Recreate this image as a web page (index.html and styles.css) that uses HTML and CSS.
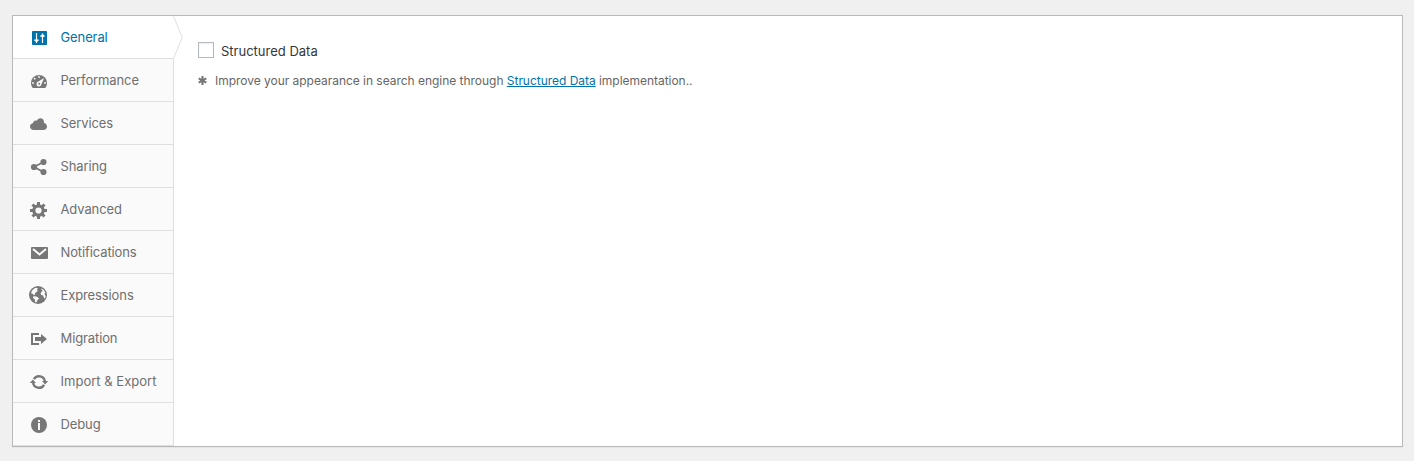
FILE: index.html
```html
<!DOCTYPE html>
<html lang="en">
<head>
<meta charset="utf-8">
<title>Settings</title>
<link rel="stylesheet" href="styles.css">
</head>
<body>
<main class="panel">
  <nav class="tabs">
    <a class="tab tab-active"><svg class="icon" viewBox="0 0 20 20"><rect x="3" y="3" width="15" height="14" rx=".8" fill="currentColor"/><path d="M7.500 5v10M5.300 12.200h4.400M13.500 5.500V15M11.300 8.200h4.400" stroke="#fff" stroke-width="1.200" fill="none"/><path d="M5.500 12h4l-2 2.700zM11.500 8.300h4l-2-2.700z" fill="#fff"/></svg><span class="label">General</span><svg class="pointer" viewBox="0 0 10 43"><path d="M0 0h1l8 21.500L1 42H0z" fill="#fff"/><path d="M.5 0L9.200 21.500L.5 42.500" fill="none" stroke="#dfdfdf"/></svg></a>
    <a class="tab"><svg class="icon" viewBox="0 0 20 20"><path fill="currentColor" d="M3.800 17C2.600 15.600 2 14 2 12a8 8 0 0 1 16 0c0 2-.6 3.600-1.800 5z"/><g fill="#fafafa"><circle cx="10" cy="6" r=".9"/><circle cx="5.700" cy="7.700" r=".9"/><circle cx="4" cy="12" r=".9"/><circle cx="16" cy="12" r=".9"/><path d="M15 7l-2.600 6.500a2.500 2.500 0 1 1-3-3z"/></g><circle cx="10.200" cy="12.800" r="1" fill="currentColor"/></svg><span class="label">Performance</span></a>
    <a class="tab"><svg class="icon" viewBox="0 0 20 20"><path fill="currentColor" d="M14.800 9c1.800.2 3.200 1.600 3.200 3.500 0 2-1.600 3.500-3.500 3.500h-10C2.600 16 1 14.500 1 12.600c0-1.800 1.400-3.300 3.200-3.500C4.200 7.500 5.200 6.500 6.700 6.500c.4 0 .8.100 1.200.3C8.500 5.200 9.700 4.300 11.300 4.300c2.200 0 3.700 1.600 3.700 3.700 0 .4 0 .7-.2 1z"/></svg><span class="label">Services</span></a>
    <a class="tab"><svg class="icon" viewBox="0 0 20 20"><path d="M14.500 5L5 10l9.500 5" fill="none" stroke="currentColor" stroke-width="1.800"/><g fill="currentColor"><circle cx="14.500" cy="5" r="3.100"/><circle cx="5" cy="10" r="3.100"/><circle cx="14.500" cy="15" r="3.100"/></g></svg><span class="label">Sharing</span></a>
    <a class="tab"><svg class="icon" viewBox="0 0 20 20"><circle cx="9.500" cy="10.500" r="4.700" fill="none" stroke="currentColor" stroke-width="3.200"/><path d="M9.500 2v3M9.500 16v3M1 10.500h3M15 10.500h3M3.500 4.500l2 2M13.500 14.500l2 2M15.500 4.500l-2 2M5.500 14.500l-2 2" stroke="currentColor" stroke-width="3"/></svg><span class="label">Advanced</span></a>
    <a class="tab"><svg class="icon" viewBox="0 0 20 20"><rect x="2" y="4" width="17" height="12" rx="1" fill="currentColor"/><path d="M4 5.900l6.500 5.600L17 5.900" fill="none" stroke="#fafafa" stroke-width="2"/></svg><span class="label">Notifications</span></a>
    <a class="tab"><svg class="icon" viewBox="0 0 20 20"><circle cx="9" cy="9" r="9" fill="currentColor"/><path fill="#fafafa" d="M2 7.300C2.600 4.600 4.500 2.600 7 1.700l1.900.6-1 1.700 1 1-1.800 1.300L5.500 8l.8.900H4.800L3.600 7.700zM4.300 10.200l3.400.2 2.500 2-1.700 1.700-1.100 2.500-1.200-.3-.5-3L4 12zM12.200 2.300l2.500 1.600 1.900 3.200-1.200.4.900 1.800.4 1.500-.9 2-1.100-1.600-.5-1.700-1.900-.5-.8-1.500 1-1.700 1.200-.8-.9-.9z"/></svg><span class="label">Expressions</span></a>
    <a class="tab"><svg class="icon" viewBox="0 0 20 20"><path d="M10 5H3v10h7" fill="none" stroke="currentColor" stroke-width="2"/><path fill="currentColor" d="M6 8h6V5l6 5-6 5v-3H6z"/></svg><span class="label">Migration</span></a>
    <a class="tab"><svg class="icon" viewBox="0 0 20 20"><path d="M4.900 7.200a5.900 5.900 0 0 1 11 2.300M15.100 12.800a5.900 5.900 0 0 1-11-2.300" fill="none" stroke="currentColor" stroke-width="2.400"/><path fill="currentColor" d="M.8 10.900L3.900 7.500l3 3.400zM13.100 9.100h6.100l-3.100 3.400z"/></svg><span class="label">Import &amp; Export</span></a>
    <a class="tab"><svg class="icon" viewBox="0 0 20 20"><circle cx="10" cy="10" r="8" fill="currentColor"/><path fill="#fafafa" d="M9 5h2v2H9zM9 8h2v7H9z"/></svg><span class="label">Debug</span></a>
  </nav>
  <section class="content">
    <label class="option"><input class="checkbox" type="checkbox"><span class="option-label">Structured Data</span></label>
    <p class="hint"><svg class="star" viewBox="0 0 9 9"><path d="M4.500 0v9M.7 2.300l7.600 4.400M8.300 2.300L.7 6.700" stroke="currentColor" stroke-width="2.100"/></svg><span class="hint-text">Improve your appearance in search engine through <a class="link" href="#">Structured Data</a> implementation..</span></p>
  </section>
</main>
</body>
</html>
```
FILE: styles.css
```css
* { box-sizing: border-box; }
body {
  margin: 0;
  padding: 15px 11px 14px 12px;
  background: #f0f0f0;
  font-family: Inter, "Liberation Sans", sans-serif;
  font-size: 13px;
}
.panel {
  display: flex;
  height: 432px;
  background: #fff;
  border: 1px solid #b9b9b9;
  box-shadow: 0 1px 1px rgba(0, 0, 0, .04);
}
.tabs { width: 161px; flex: none; }
.tab {
  position: relative;
  display: flex;
  align-items: center;
  height: 43px;
  padding-left: 16px;
  color: #777;
  background: #fafafa;
  border-right: 1px solid #dfdfdf;
  border-bottom: 1px solid #dfdfdf;
}
.tab-active { color: #0073aa; background: #fff; border-right-color: #fff; }
.icon { width: 20px; height: 20px; flex: none; margin-top: 2px; }
.label { margin-left: 11.500px; line-height: 20px; letter-spacing: -.11px; white-space: nowrap; color: #6f6f6f; }
.tab-active .label { color: #0073aa; }
.tab:nth-child(9) .label { letter-spacing: .02px; }
.pointer { position: absolute; left: 160px; top: 0; width: 10px; height: 43px; }
.content { padding: 25px 24px; }
.option { display: flex; align-items: center; height: 20px; color: #32373c; }
.checkbox {
  appearance: none;
  width: 16px;
  height: 16px;
  margin: -2px 7px 0 0;
  border: 1px solid #b4b9be;
  background: #fff;
  box-shadow: inset 0 1px 2px rgba(0, 0, 0, .07);
}
.hint { display: flex; align-items: center; height: 20px; margin: 9px 0 0; color: #666; font-size: 12px; }
.star { width: 9px; height: 9px; margin-right: 8px; color: #777; }
.hint-text { white-space: nowrap; letter-spacing: -.03px; }
.link { color: #0073aa; }
```
